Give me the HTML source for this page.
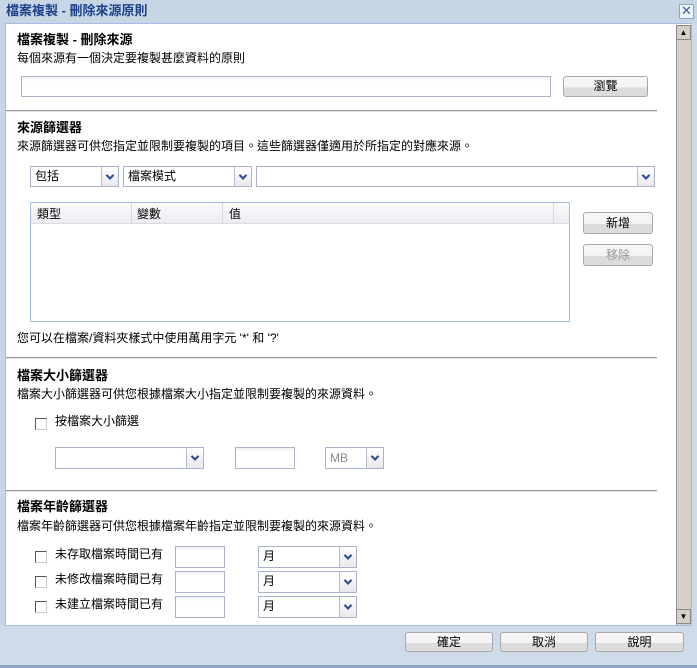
<!DOCTYPE html>
<html><head><meta charset="utf-8"><style>
*{margin:0;padding:0;box-sizing:border-box}
body{width:697px;height:668px;overflow:hidden;background:#cfdbe9;font-family:"Liberation Sans","Noto Sans CJK TC",sans-serif;font-size:12px;color:#000;position:relative}
.a{position:absolute}
.t{position:absolute;white-space:nowrap;line-height:14px}
.b{font-weight:bold;font-size:13px}
.inp{position:absolute;border:1px solid #a9b3cc;background:linear-gradient(#f0f0f4,#fff 4px)}
.btn{position:absolute;border:1px solid #a8a8a8;border-radius:3px;background:linear-gradient(#f8f6f8 0,#f4f2f4 55%,#dddcdd 56%,#dddcdd);text-align:center;line-height:18px;font-size:12px}
.sel{position:absolute;border:1px solid #a9b3cc;background:#fff}
.sel span{position:absolute;left:4px;top:2px;line-height:14px;white-space:nowrap}
.sel i{position:absolute;right:0;top:0;bottom:0;width:17px;border-left:1px solid #b5bccc;background:linear-gradient(#fff,#e8e8ee)}
.sel i:after{content:"";position:absolute;left:5px;top:7px;width:4px;height:4px;border-right:2px solid #2a4d8f;border-bottom:2px solid #2a4d8f;transform:rotate(45deg) translate(-1px,-1px)}
.hr{position:absolute;left:6px;width:651px;height:2px;background:#9a9a9a;border-bottom:1px solid #e4e4e4}
.cb{position:absolute;width:12px;height:12px;border:1px solid #555;border-right-color:#ccc;border-bottom-color:#ccc;background:#fff}
</style></head><body>
<div class="a" style="left:0;top:0;width:697px;height:23px;background:#c7d6e5"></div>
<div class="t" style="left:6px;top:4px;font-weight:bold;color:#1c3f8c;font-size:13px">檔案複製 - 刪除來源原則</div>
<div class="a" style="left:679px;top:4px;width:15px;height:15px;border:1px solid #8ea6cc;background:#eef3fa;color:#3a5fa0;font-size:13px;line-height:12px;text-align:center">✕</div>
<div class="a" style="left:0;top:23px;width:6px;height:603px;background:#c6d6e8"></div>
<div class="a" style="left:5px;top:23px;width:687px;height:603px;border:1px solid #a6bedd;background:#fff"></div>
<div class="a" style="left:676px;top:25px;width:15px;height:600px;background:#d4d0c8;border-left:1px solid #999"></div>
<div class="a" style="left:676px;top:25px;width:15px;height:15px;background:#d4d0c8;border:1px solid #888;font-size:8px;text-align:center;line-height:13px">▲</div>
<div class="a" style="left:676px;top:609px;width:15px;height:15px;background:#d4d0c8;border:1px solid #888;font-size:8px;text-align:center;line-height:13px">▼</div>

<div class="t b" style="left:17px;top:33px">檔案複製 - 刪除來源</div>
<div class="t" style="left:17px;top:51px">每個來源有一個決定要複製甚麼資料的原則</div>
<div class="inp" style="left:21px;top:76px;width:530px;height:21px"></div>
<div class="btn" style="left:563px;top:76px;width:85px;height:21px;line-height:19px">瀏覽</div>
<div class="hr" style="top:110px"></div>

<div class="t b" style="left:17px;top:121px">來源篩選器</div>
<div class="t" style="left:17px;top:139px">來源篩選器可供您指定並限制要複製的項目。這些篩選器僅適用於所指定的對應來源。</div>
<div class="sel" style="left:30px;top:166px;width:89px;height:21px"><span>包括</span><i></i></div>
<div class="sel" style="left:123px;top:166px;width:129px;height:21px"><span>檔案模式</span><i></i></div>
<div class="sel" style="left:256px;top:166px;width:399px;height:21px"><i></i></div>
<div class="a" style="left:30px;top:202px;width:540px;height:120px;border:1px solid #a4bde2;background:#fff"></div>
<div class="a" style="left:31px;top:203px;width:538px;height:21px;background:linear-gradient(#fbfbfd,#ececf2);border-bottom:1px solid #dcdce0"></div>
<div class="a" style="left:131px;top:203px;width:1px;height:21px;background:#d8d8dc"></div>
<div class="a" style="left:222px;top:203px;width:1px;height:21px;background:#d8d8dc"></div>
<div class="a" style="left:553px;top:203px;width:1px;height:21px;background:#d8d8dc"></div>
<div class="t" style="left:37px;top:207px">類型</div>
<div class="t" style="left:137px;top:207px">變數</div>
<div class="t" style="left:229px;top:207px">值</div>
<div class="btn" style="left:583px;top:212px;width:70px;height:22px;line-height:20px">新增</div>
<div class="btn" style="left:583px;top:244px;width:70px;height:22px;line-height:20px;color:#999">移除</div>
<div class="t" style="left:17px;top:331px">您可以在檔案/資料夾樣式中使用萬用字元 '*' 和 '?'</div>
<div class="hr" style="top:357px"></div>

<div class="t b" style="left:17px;top:369px">檔案大小篩選器</div>
<div class="t" style="left:17px;top:387px">檔案大小篩選器可供您根據檔案大小指定並限制要複製的來源資料。</div>
<div class="cb" style="left:35px;top:418px"></div>
<div class="t" style="left:55px;top:414px">按檔案大小篩選</div>
<div class="sel" style="left:55px;top:447px;width:149px;height:22px"><i></i></div>
<div class="inp" style="left:235px;top:447px;width:60px;height:22px"></div>
<div class="sel" style="left:325px;top:447px;width:59px;height:22px"><span style="color:#888;top:3px">MB</span><i></i></div>
<div class="hr" style="top:490px"></div>

<div class="t b" style="left:17px;top:500px">檔案年齡篩選器</div>
<div class="t" style="left:17px;top:519px">檔案年齡篩選器可供您根據檔案年齡指定並限制要複製的來源資料。</div>
<div class="cb" style="left:35px;top:551px"></div>
<div class="t" style="left:55px;top:547px">未存取檔案時間已有</div>
<div class="inp" style="left:175px;top:546px;width:50px;height:22px"></div>
<div class="sel" style="left:258px;top:546px;width:99px;height:22px"><span>月</span><i></i></div>
<div class="cb" style="left:35px;top:576px"></div>
<div class="t" style="left:55px;top:572px">未修改檔案時間已有</div>
<div class="inp" style="left:175px;top:571px;width:50px;height:22px"></div>
<div class="sel" style="left:258px;top:571px;width:99px;height:22px"><span>月</span><i></i></div>
<div class="cb" style="left:35px;top:601px"></div>
<div class="t" style="left:55px;top:597px">未建立檔案時間已有</div>
<div class="inp" style="left:175px;top:596px;width:50px;height:22px"></div>
<div class="sel" style="left:258px;top:596px;width:99px;height:22px"><span>月</span><i></i></div>

<div class="btn" style="left:405px;top:632px;width:88px;height:20px">確定</div>
<div class="btn" style="left:500px;top:632px;width:88px;height:20px">取消</div>
<div class="btn" style="left:595px;top:632px;width:89px;height:20px">說明</div>
<div class="a" style="left:0;top:665px;width:697px;height:3px;background:#8fa3c4"></div>
</body></html>
